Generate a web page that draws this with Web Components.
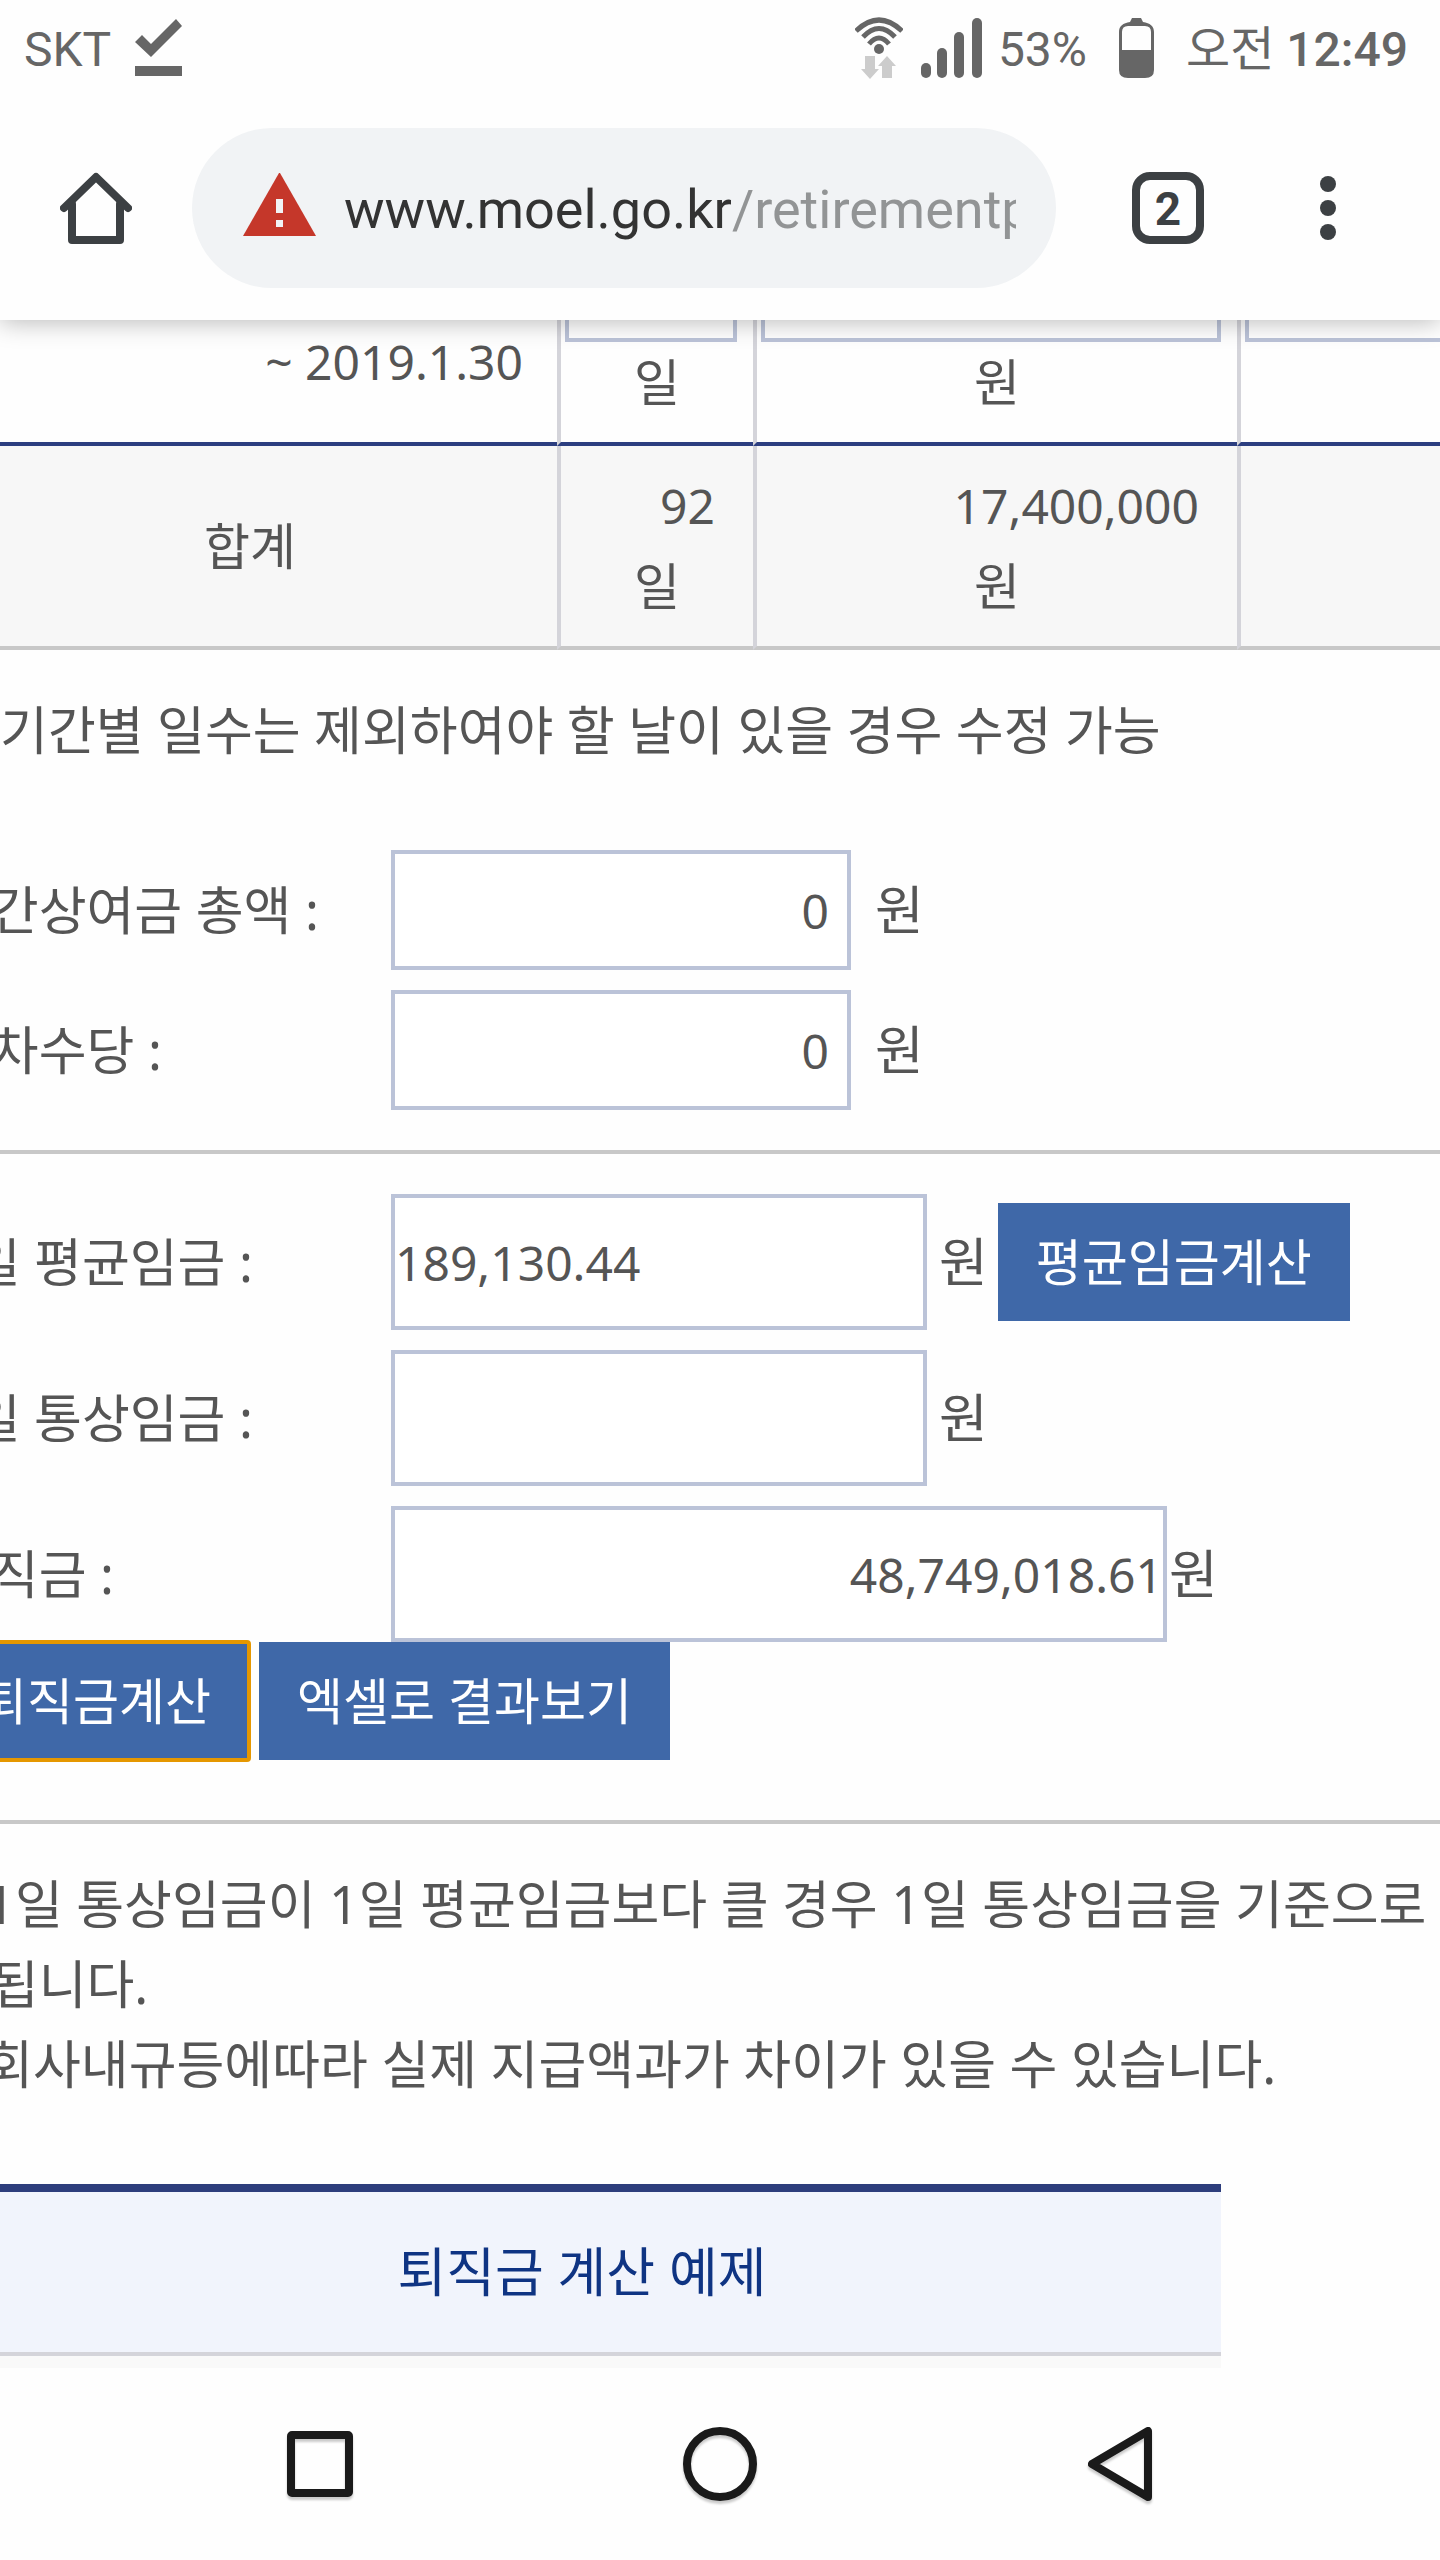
<!DOCTYPE html>
<html lang="ko">
<head>
<meta charset="utf-8">
<meta name="viewport" content="width=device-width">
<title>퇴직금 계산</title>
<style>
  html, body { margin: 0; height: 100%; }
  body {
    background: #fefefe;
    color: #555;
    font-family: "Noto Sans", "Noto Sans CJK KR", sans-serif;
    font-size: 53px;
    line-height: 80px;
  }
</style>
</head>
<body>
<phone-screen>
  <status-bar slot="top" carrier="SKT" battery="53%" meridiem="오전" time="12:49"></status-bar>
  <browser-toolbar slot="top" host="www.moel.go.kr" path="/retirementpay" tabs="2"></browser-toolbar>

  <wage-table></wage-table>
  <page-note>※ 기간별 일수는 제외하여야 할 날이 있을 경우 수정 가능</page-note>
  <field-group class="extras">
    <wage-field label="연간상여금 총액 :" value="0" size="small">원</wage-field>
    <wage-field label="연차수당 :" value="0" size="small">원</wage-field>
  </field-group>
  <field-group>
    <wage-field label="1일 평균임금 :" value="189,130.44" size="medium">원<calc-button slot="action">평균임금계산</calc-button></wage-field>
    <wage-field label="1일 통상임금 :" value="" size="medium">원</wage-field>
    <wage-field label="퇴직금 :" value="48,749,018.61" size="large">원</wage-field>
    <calc-button slot="actions" active>퇴직금계산</calc-button>
    <calc-button slot="actions">엑셀로 결과보기</calc-button>
  </field-group>
  <page-note>* 1일 통상임금이 1일 평균임금보다 클 경우 1일 통상임금을 기준으로<br>산됩니다.<br>* 회사내규등에따라 실제 지급액과가 차이가 있을 수 있습니다.</page-note>
  <example-table>퇴직금 계산 예제</example-table>

  <nav-keys slot="bottom"></nav-keys>
</phone-screen>

<script>
(() => {
  class BaseElement extends HTMLElement {
    constructor() {
      super();
      this.shadow = this.attachShadow({ mode: "open" });
    }
    connectedCallback() {
      this.shadow.innerHTML = this.render();
    }
    attr(name) {
      return this.getAttribute(name) || "";
    }
  }

  class PhoneScreen extends BaseElement {
    render() {
      return `
      <style>
        :host { display: flex; flex-direction: column; height: 100vh; overflow: hidden; }
        header { position: relative; z-index: 1; background: #fefefe; box-shadow: 0 2px 24px rgba(0, 0, 0, .28); }
        main { flex: 1; min-height: 0; overflow: hidden; }
        /* the document is panned a little to the right */
        .page { margin-left: -57px; }
      </style>
      <header><slot name="top"></slot></header>
      <main><div class="page"><slot></slot></div></main>
      <slot name="bottom"></slot>`;
    }
  }
  customElements.define("phone-screen", PhoneScreen);

  class StatusBar extends BaseElement {
    render() {
      return `
      <style>
        :host {
          display: flex; align-items: center; height: 96px; padding: 0 32px 0 24px;
          color: #666; font: 48px/56px Roboto, "Noto Sans CJK KR", sans-serif;
        }
        span { padding-top: 4px; }
        svg { display: block; fill: #666; }
        .check { margin-left: 24px; }
        .wifi { margin-left: auto; }
        .signal { margin: 0 16px 0 18px; }
        .battery { margin: 0 32px; }
        b { font-weight: 500; }
      </style>
      <span>${this.attr("carrier")}</span>
      <svg class="check" width="48" height="58" viewBox="0 0 48 58">
        <path d="M0 23 7 16 16 25 41 0 47 7 16 38z"/><path d="M0 47h47v10H0z"/>
      </svg>
      <svg class="wifi" width="48" height="62" viewBox="0 0 48 62">
        <g fill="none" stroke="#666" stroke-width="5">
          <path d="M1 14Q24-8 47 14"/><path d="M8 20Q24 3 40 20"/><path d="M14 27Q24 15 34 27"/>
        </g>
        <circle cx="24" cy="32" r="5"/>
        <path fill="#ccc" d="M10 39h10v13h4l-9 10-9-10h4zM27 61V49h-4l9-10 9 10h-4v12z"/>
      </svg>
      <svg class="signal" width="61" height="60" viewBox="0 0 61 60">
        <rect y="45" width="10" height="15" rx="5"/><rect x="16" y="30" width="10" height="30" rx="5"/>
        <rect x="33" y="14" width="10" height="46" rx="5"/><rect x="51" width="10" height="60" rx="5"/>
      </svg>
      <span>${this.attr("battery")}</span>
      <svg class="battery" width="35" height="60" viewBox="0 0 35 60">
        <path fill-rule="evenodd" d="M13 0h9l2 4c7 1 11 4 11 10v38q0 8-9 8H9q-9 0-9-8V14C0 8 4 5 11 4zM9 8q-6 0-6 6v18h29V14q0-6-6-6z"/>
      </svg>
      <span>${this.attr("meridiem")} <b>${this.attr("time")}</b></span>`;
    }
  }
  customElements.define("status-bar", StatusBar);

  class BrowserToolbar extends BaseElement {
    render() {
      return `
      <style>
        :host { display: flex; align-items: center; height: 224px; padding-right: 64px; font-family: Roboto, sans-serif; }
        button {
          display: flex; align-items: center; justify-content: center; height: 160px;
          padding: 0; border: 0; background: none; color: #3c4043; font: bold 46px/58px Roboto, sans-serif;
        }
        .home { width: 192px; }
        .tabs { width: 224px; }
        .menu { width: 96px; }
        .tabs span { box-sizing: border-box; width: 72px; height: 72px; border: 8px solid; border-radius: 18px; }
        .address {
          display: flex; align-items: center; flex: 1; min-width: 0; box-sizing: border-box;
          height: 160px; padding: 0 40px 0 51px; border-radius: 80px; background: #f1f3f5;
        }
        .address svg { flex: none; margin: 0 28px 8px 0; }
        a {
          flex: 1; min-width: 0; padding-top: 4px; overflow: hidden; white-space: nowrap;
          color: #333; font-size: 54px; line-height: 72px; text-decoration: none;
        }
        a span { color: #929495; }
      </style>
      <button class="home" aria-label="홈">
        <svg width="72" height="72" viewBox="0 0 72 72" fill="none" stroke="#3c4043" stroke-width="8" stroke-linecap="round" stroke-linejoin="round">
          <path d="M4 36 36 5l32 31"/><path d="M12 32v36h48V32"/>
        </svg>
      </button>
      <div class="address">
        <svg width="73" height="63" viewBox="0 0 73 63">
          <path fill="#c5372a" d="M36 0h1l36 63H0z"/><path fill="#f1f3f5" d="M33 26h7v14h-7zM33 47h7v7h-7z"/>
        </svg>
        <a href="#">${this.attr("host")}<span>${this.attr("path")}</span></a>
      </div>
      <button class="tabs"><span>${this.attr("tabs")}</span></button>
      <button class="menu" aria-label="메뉴">
        <svg width="16" height="64" viewBox="0 0 16 64" fill="#3c4043">
          <circle cx="8" cy="8" r="8"/><circle cx="8" cy="32" r="8"/><circle cx="8" cy="56" r="8"/>
        </svg>
      </button>`;
    }
  }
  customElements.define("browser-toolbar", BrowserToolbar);

  class WageTable extends BaseElement {
    render() {
      return `
      <style>
        /* scrolled up so that the last period is half under the toolbar */
        :host { display: block; margin-top: -118px; font-size: 50px; }
        table { width: 100%; table-layout: fixed; border-collapse: separate; border-spacing: 0; }
        .period { width: 614px; }
        .days { width: 196px; }
        .pay { width: 484px; }
        th, td { padding: 20px 0; border-left: 4px solid #d4d4da; font-weight: 400; text-align: center; }
        th { border-left: 0; }
        tbody th, tbody td { border-bottom: 4px solid #2c3e80; }
        tbody th { padding-right: 34px; text-align: right; font-size: 48px; }
        tfoot th, tfoot td { border-bottom: 4px solid #c8c8c8; background: #f7f7f7; }
        input {
          display: block; box-sizing: border-box; width: 460px; height: 120px; margin: 0 0 0 4px; padding: 0 16px;
          border: 4px solid #bbc3d8; background: #fff; color: inherit; font: inherit; text-align: right;
        }
        .short { width: 172px; }
        .number { display: block; padding-right: 38px; font-size: 48px; text-align: right; }
        .unit { display: block; }
      </style>
      <table>
        <colgroup><col class="period"><col class="days"><col class="pay"><col></colgroup>
        <tbody><tr>
          <th scope="row"><br>~ 2019.1.30</th>
          <td><input class="short" aria-label="일수"><span class="unit">일</span></td>
          <td><input aria-label="기본급"><span class="unit">원</span></td>
          <td><input aria-label="기타수당"><span class="unit">&nbsp;</span></td>
        </tr></tbody>
        <tfoot><tr>
          <th scope="row">합계</th>
          <td><span class="number">92</span><span class="unit">일</span></td>
          <td><span class="number">17,400,000</span><span class="unit">원</span></td>
          <td></td>
        </tr></tfoot>
      </table>`;
    }
  }
  customElements.define("wage-table", WageTable);

  class PageNote extends BaseElement {
    render() {
      return `
      <style>
        :host { display: block; padding-top: 40px; font-size: 52px; white-space: nowrap; }
        p { margin: 0; }
      </style>
      <p><slot></slot></p>`;
    }
  }
  customElements.define("page-note", PageNote);

  class FieldGroup extends BaseElement {
    render() {
      return `
      <style>
        :host { display: block; padding: 40px 0; border-bottom: 4px solid #c8c8c8; }
        :host(.extras) { padding-top: 80px; }
        .fields { display: flex; flex-direction: column; gap: 20px; }
        .actions { display: flex; gap: 10px; }
        .actions.used { padding-bottom: 20px; }
      </style>
      <div class="fields"><slot></slot></div>
      <div class="actions${this.querySelector("[slot=actions]") ? " used" : ""}"><slot name="actions"></slot></div>`;
    }
  }
  customElements.define("field-group", FieldGroup);

  class WageField extends BaseElement {
    render() {
      return `
      <style>
        :host { display: flex; align-items: center; white-space: nowrap; }
        label { flex: none; width: 448px; font-size: 52px; }
        input {
          flex: none; box-sizing: border-box; width: 536px; height: 136px; margin: 0 12px 0 0; padding: 0;
          border: 4px solid #bbc3d8; border-radius: 0; background: #fff; color: inherit;
          font: inherit; font-size: 48px;
        }
        :host([size="small"]) input { width: 460px; height: 120px; margin-right: 24px; padding: 0 18px; text-align: right; }
        :host([size="large"]) input { width: 776px; margin-right: 2px; text-align: right; }
        ::slotted(calc-button) { margin-left: 10px; }
      </style>
      <label for="field">${this.attr("label")}</label>
      <input id="field" type="text" value="${this.attr("value")}">
      <span><slot></slot></span>
      <slot name="action"></slot>`;
    }
  }
  customElements.define("wage-field", WageField);

  class CalcButton extends BaseElement {
    render() {
      return `
      <style>
        :host { display: block; }
        button {
          display: block; height: 118px; padding: 0 38px; border: 0; background: #3f68a8;
          color: #fff; font: inherit; font-size: 50px; white-space: nowrap;
        }
        :host([active]) button { outline: 4px solid #e59700; outline-offset: -2px; border-radius: 2px; }
      </style>
      <button type="button"><slot></slot></button>`;
    }
  }
  customElements.define("calc-button", CalcButton);

  class ExampleTable extends BaseElement {
    render() {
      return `
      <style>
        :host { display: block; margin: 80px 219px 0 0; }
        table { width: 100%; border-collapse: separate; border-spacing: 0; border-top: 8px solid #2d3d7c; }
        th { padding: 40px 0; border-bottom: 4px solid #d4d4da; background: #f1f4fc; color: #0f3483; font-weight: 400; }
        td { height: 80px; padding: 0; background: #f9f9f9; }
      </style>
      <table>
        <thead><tr><th scope="col"><slot></slot></th></tr></thead>
        <tbody><tr><td></td></tr></tbody>
      </table>`;
    }
  }
  customElements.define("example-table", ExampleTable);

  class NavKeys extends BaseElement {
    render() {
      return `
      <style>
        :host { display: flex; flex: none; justify-content: center; gap: 240px; height: 192px; background: #fefefe; }
        button { display: flex; align-items: center; justify-content: center; width: 160px; padding: 0; border: 0; background: none; }
        svg { fill: none; stroke: #1a1a1a; stroke-width: 8; stroke-linejoin: round; filter: drop-shadow(0 3px 1px rgba(0, 0, 0, .2)); }
      </style>
      <button aria-label="최근 앱"><svg width="80" height="80" viewBox="0 0 80 80"><rect x="11" y="11" width="58" height="58" rx="1"/></svg></button>
      <button aria-label="홈"><svg width="80" height="80" viewBox="0 0 80 80"><circle cx="40" cy="40" r="33"/></svg></button>
      <button aria-label="뒤로"><svg width="80" height="80" viewBox="0 0 80 80"><path d="M68 7v66L12 40z"/></svg></button>`;
    }
  }
  customElements.define("nav-keys", NavKeys);
})();
</script>
</body>
</html>
